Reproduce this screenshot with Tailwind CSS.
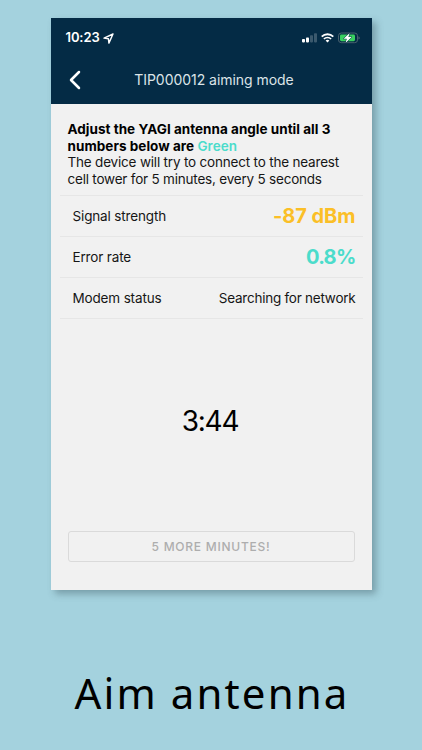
<!DOCTYPE html>
<html lang="en">
<head>
<meta charset="utf-8">
<title>Aim antenna</title>
<script src="https://cdn.jsdelivr.net/npm/@tailwindcss/browser@4"></script>
</head>
<body class="h-[750px] w-[422px] overflow-hidden bg-[#a4d2de] font-['Inter',sans-serif] text-[#161616]">
<main class="flex h-[750px] flex-col items-center pt-[18px]">
  <section class="flex h-[572px] w-[321px] flex-col bg-[#f1f1f1] shadow-[4px_4px_7px_rgba(60,85,95,0.42)]">
    <header class="h-[86px] shrink-0 bg-[#042b45] text-white">
      <div class="flex h-[40px] items-center pl-[15px] pr-[12px]">
        <span class="text-[13px] font-semibold tracking-[-0.1px]">10:23</span>
        <svg class="ml-[3px] h-[11px] w-[11px]" viewBox="0 0 11 11" fill="none" stroke="currentColor" stroke-width="1.4" stroke-linejoin="round"><path d="M10 1 1 5.1l4.4.6.5 4.4z"/></svg>
        <svg class="ml-auto h-[10px] w-[15px]" viewBox="0 0 15 10" fill="currentColor"><rect x="0" y="6" width="3" height="3.4" rx=".8"/><rect x="4" y="4.4" width="3" height="5" rx=".8"/><g fill-opacity=".22"><rect x="8" y="2.3" width="3" height="7.1" rx=".8"/><rect x="12" y=".3" width="3" height="9.1" rx=".8"/></g></svg>
        <svg class="ml-[4px] h-[10px] w-[13px]" viewBox="0 0 13 10" fill="none" stroke="currentColor"><path stroke-width="1.8" d="M.7 3.6a8.3 8.3 0 0 1 11.6 0"/><path stroke-width="1.7" d="M2.9 6a5.1 5.1 0 0 1 7.2 0"/><path fill="currentColor" stroke="none" d="M4.6 7.6a2.7 2.7 0 0 1 3.8 0L6.5 9.6z"/></svg>
        <svg class="ml-[4px] h-[12px] w-[22px]" viewBox="0 0 22 12"><rect x=".5" y="1" width="19" height="9.7" rx="2.8" fill="none" stroke="#49616f"/><rect x="2" y="2.5" width="15" height="6.7" rx="1.4" fill="#39d060"/><path d="M20.5 4.2c1.5.4 1.5 3 0 3.4z" fill="#566d7d"/><path d="M11.7 1 5.6 6.7h3.2L7.5 11l6.2-5.9h-3.3z" fill="#fff" stroke="#042b45" stroke-width="1" paint-order="stroke"/></svg>
      </div>
      <div class="relative flex h-[44px] items-center justify-center">
        <svg class="absolute left-[17px] top-[12px] h-[20px] w-[14px]" viewBox="0 0 14 20" fill="none" stroke="currentColor" stroke-width="2.5" stroke-linecap="round" stroke-linejoin="round"><path d="M11 2 3 10l8 8"/></svg>
        <h1 class="ml-[6px] whitespace-nowrap text-[14px] leading-[20px] tracking-[-0.04px] text-[#dce4e8]">TIP000012 aiming mode</h1>
      </div>
    </header>
    <div class="h-[91px] whitespace-nowrap pl-[17px] pt-[17px] text-[13.5px] leading-[16.5px]">
      <p class="font-bold tracking-[0.02px] text-black"><span class="block">Adjust the YAGI antenna angle until all 3</span><span class="block tracking-[0.04px]">numbers below are <span class="font-semibold text-[#4bdccb]">Green</span></span></p>
      <p class="tracking-[-0.19px]"><span class="block">The device will try to connect to the nearest</span><span class="block tracking-[-0.21px]">cell tower for 5 minutes, every 5 seconds</span></p>
    </div>
    <dl class="mx-[9px] border-t border-[#e6e6e6] text-[13.5px] tracking-[-0.15px]">
      <div class="flex h-[41px] items-center justify-between border-b border-[#e6e6e6] pl-[13px] pr-[7px]"><dt>Signal strength</dt><dd class="text-[20px] font-bold tracking-[-0.05px] text-[#fbbf27]">-87 dBm</dd></div>
      <div class="flex h-[41px] items-center justify-between border-b border-[#e6e6e6] pl-[13px] pr-[7px]"><dt>Error rate</dt><dd class="text-[20px] font-bold tracking-[-0.7px] text-[#4bdccb]">0.8%</dd></div>
      <div class="flex h-[41px] items-center justify-between border-b border-[#e6e6e6] pl-[13px] pr-[7px]"><dt>Modem status</dt><dd class="tracking-[-0.24px]">Searching for network</dd></div>
    </dl>
    <div class="flex flex-1 items-center justify-center pb-[8px] pr-[2px] text-[28px] tracking-[-1.2px] text-black"><span>3:44</span></div>
    <button class="mx-[17px] mb-[28px] h-[31px] shrink-0 rounded-[3px] border border-[#dadada] text-[12px] font-medium tracking-[0.75px] text-[#adadad]">5 MORE MINUTES!</button>
  </section>
  <h2 class="mt-[73px] whitespace-nowrap pl-[2px] font-['Noto_Sans',sans-serif] text-[42px] leading-[60px] tracking-[2.1px] text-black">Aim antenna</h2>
</main>
</body>
</html>
